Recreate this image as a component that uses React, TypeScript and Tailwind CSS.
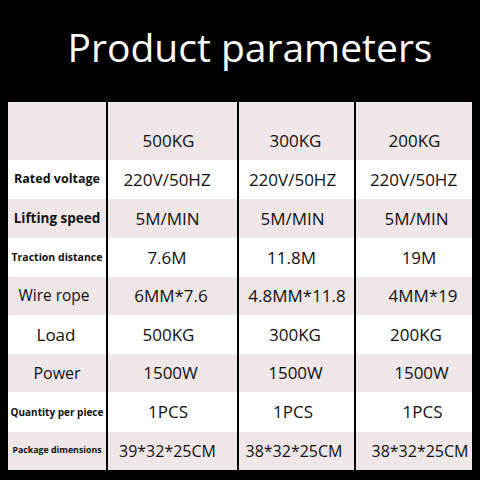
import React from 'react';

type Row = {
  label: string;
  labelClass: string;
  values: string[];
  shifts: string[];
  h: string;
  pink: boolean;
  valueClass?: string;
};

const rows: Row[] = [
  {
    label: 'Rated voltage',
    labelClass: 'text-[12.5px] font-bold',
    values: ['220V/50HZ', '220V/50HZ', '220V/50HZ'],
    shifts: ['pr-[11px]', 'pr-[8px]', 'pr-[1px]'],
    h: 'h-[39px]',
    pink: false,
  },
  {
    label: 'Lifting speed',
    labelClass: 'text-[13.5px] font-bold',
    values: ['5M/MIN', '5M/MIN', '5M/MIN'],
    shifts: ['pr-[10px]', 'pr-[8px]', 'pl-[5px]'],
    h: 'h-[39px]',
    pink: true,
  },
  {
    label: 'Traction distance',
    labelClass: 'text-[10.5px] font-bold',
    values: ['7.6M', '11.8M', '19M'],
    shifts: ['pr-[11px]', 'pr-[10px]', 'pl-[10px]'],
    h: 'h-[39px]',
    pink: false,
  },
  {
    label: 'Wire rope',
    labelClass: 'text-[15.5px] font-medium pr-[6px]',
    values: ['6MM*7.6', '4.8MM*11.8', '4MM*19'],
    shifts: ['pr-[3px]', 'pl-[1px]', 'pl-[18px]'],
    h: 'h-[38px]',
    pink: true,
  },
  {
    label: 'Load',
    labelClass: 'text-[17px] font-medium pr-[2px]',
    values: ['500KG', '300KG', '200KG'],
    shifts: ['pr-[8px]', 'pr-[3px]', 'pl-[4px]'],
    h: 'h-[39px]',
    pink: false,
  },
  {
    label: 'Power',
    labelClass: 'text-[16px] font-medium',
    values: ['1500W', '1500W', '1500W'],
    shifts: ['pr-[4px]', 'pr-[2px]', 'pl-[15px]'],
    h: 'h-[38px]',
    pink: true,
  },
  {
    label: 'Quantity per piece',
    labelClass: 'text-[10px] font-bold',
    values: ['1PCS', '1PCS', '1PCS'],
    shifts: ['pr-[9px]', 'pr-[7px]', 'pl-[17px]'],
    h: 'h-[40px]',
    pink: false,
  },
  {
    label: 'Package dimensions',
    labelClass: 'text-[8.8px] font-bold',
    values: ['39*32*25CM', '38*32*25CM', '38*32*25CM'],
    shifts: ['pr-[10px]', 'pr-[5px]', 'pl-[12px]'],
    h: 'h-[38px]',
    pink: true,
    valueClass: 'text-[16px]',
  },
];

const App: React.FC = () => {
  return (
    <div
      className="w-[480px] h-[480px] bg-black overflow-hidden"
      style={{ fontFamily: '"Open Sans", "Noto Sans", sans-serif' }}
    >
      <div className="h-[102px] pt-[27px] pl-[20px] text-center">
        <h1 className="text-white text-[39px] leading-none font-medium">Product parameters</h1>
      </div>

      <div className="ml-[8px] w-[464px] flex flex-col text-[#111]">
        {/* header row */}
        <div className="grid grid-cols-[98px_129px_115px_116px] gap-x-[2px] bg-black h-[58px]">
          <div className="bg-[#efe7e7]" />
          {['500KG', '300KG', '200KG'].map((v, i) => (
            <div
              key={v}
              className={
                'bg-[#efe7e7] flex items-center justify-center pt-[20px] text-[17px] font-medium ' +
                ['pr-[8px]', 'pr-[2px]', 'pl-[1px]'][i]
              }
            >
              {v}
            </div>
          ))}
        </div>

        {rows.map((r) => (
          <div
            key={r.label}
            className={'grid grid-cols-[98px_129px_115px_116px] gap-x-[2px] bg-black ' + r.h}
          >
            <div
              className={
                'flex items-center justify-center whitespace-nowrap ' +
                (r.pink ? 'bg-[#efe7e7] ' : 'bg-white ') +
                r.labelClass
              }
            >
              {r.label}
            </div>
            {r.values.map((v, i) => (
              <div
                key={i}
                className={
                  'flex items-center justify-center whitespace-nowrap font-medium ' +
                  (r.pink ? 'bg-[#efe7e7] ' : 'bg-white ') +
                  (r.valueClass ?? 'text-[17px]') +
                  ' ' +
                  r.shifts[i]
                }
              >
                {v}
              </div>
            ))}
          </div>
        ))}
      </div>
    </div>
  );
};

export default App;
